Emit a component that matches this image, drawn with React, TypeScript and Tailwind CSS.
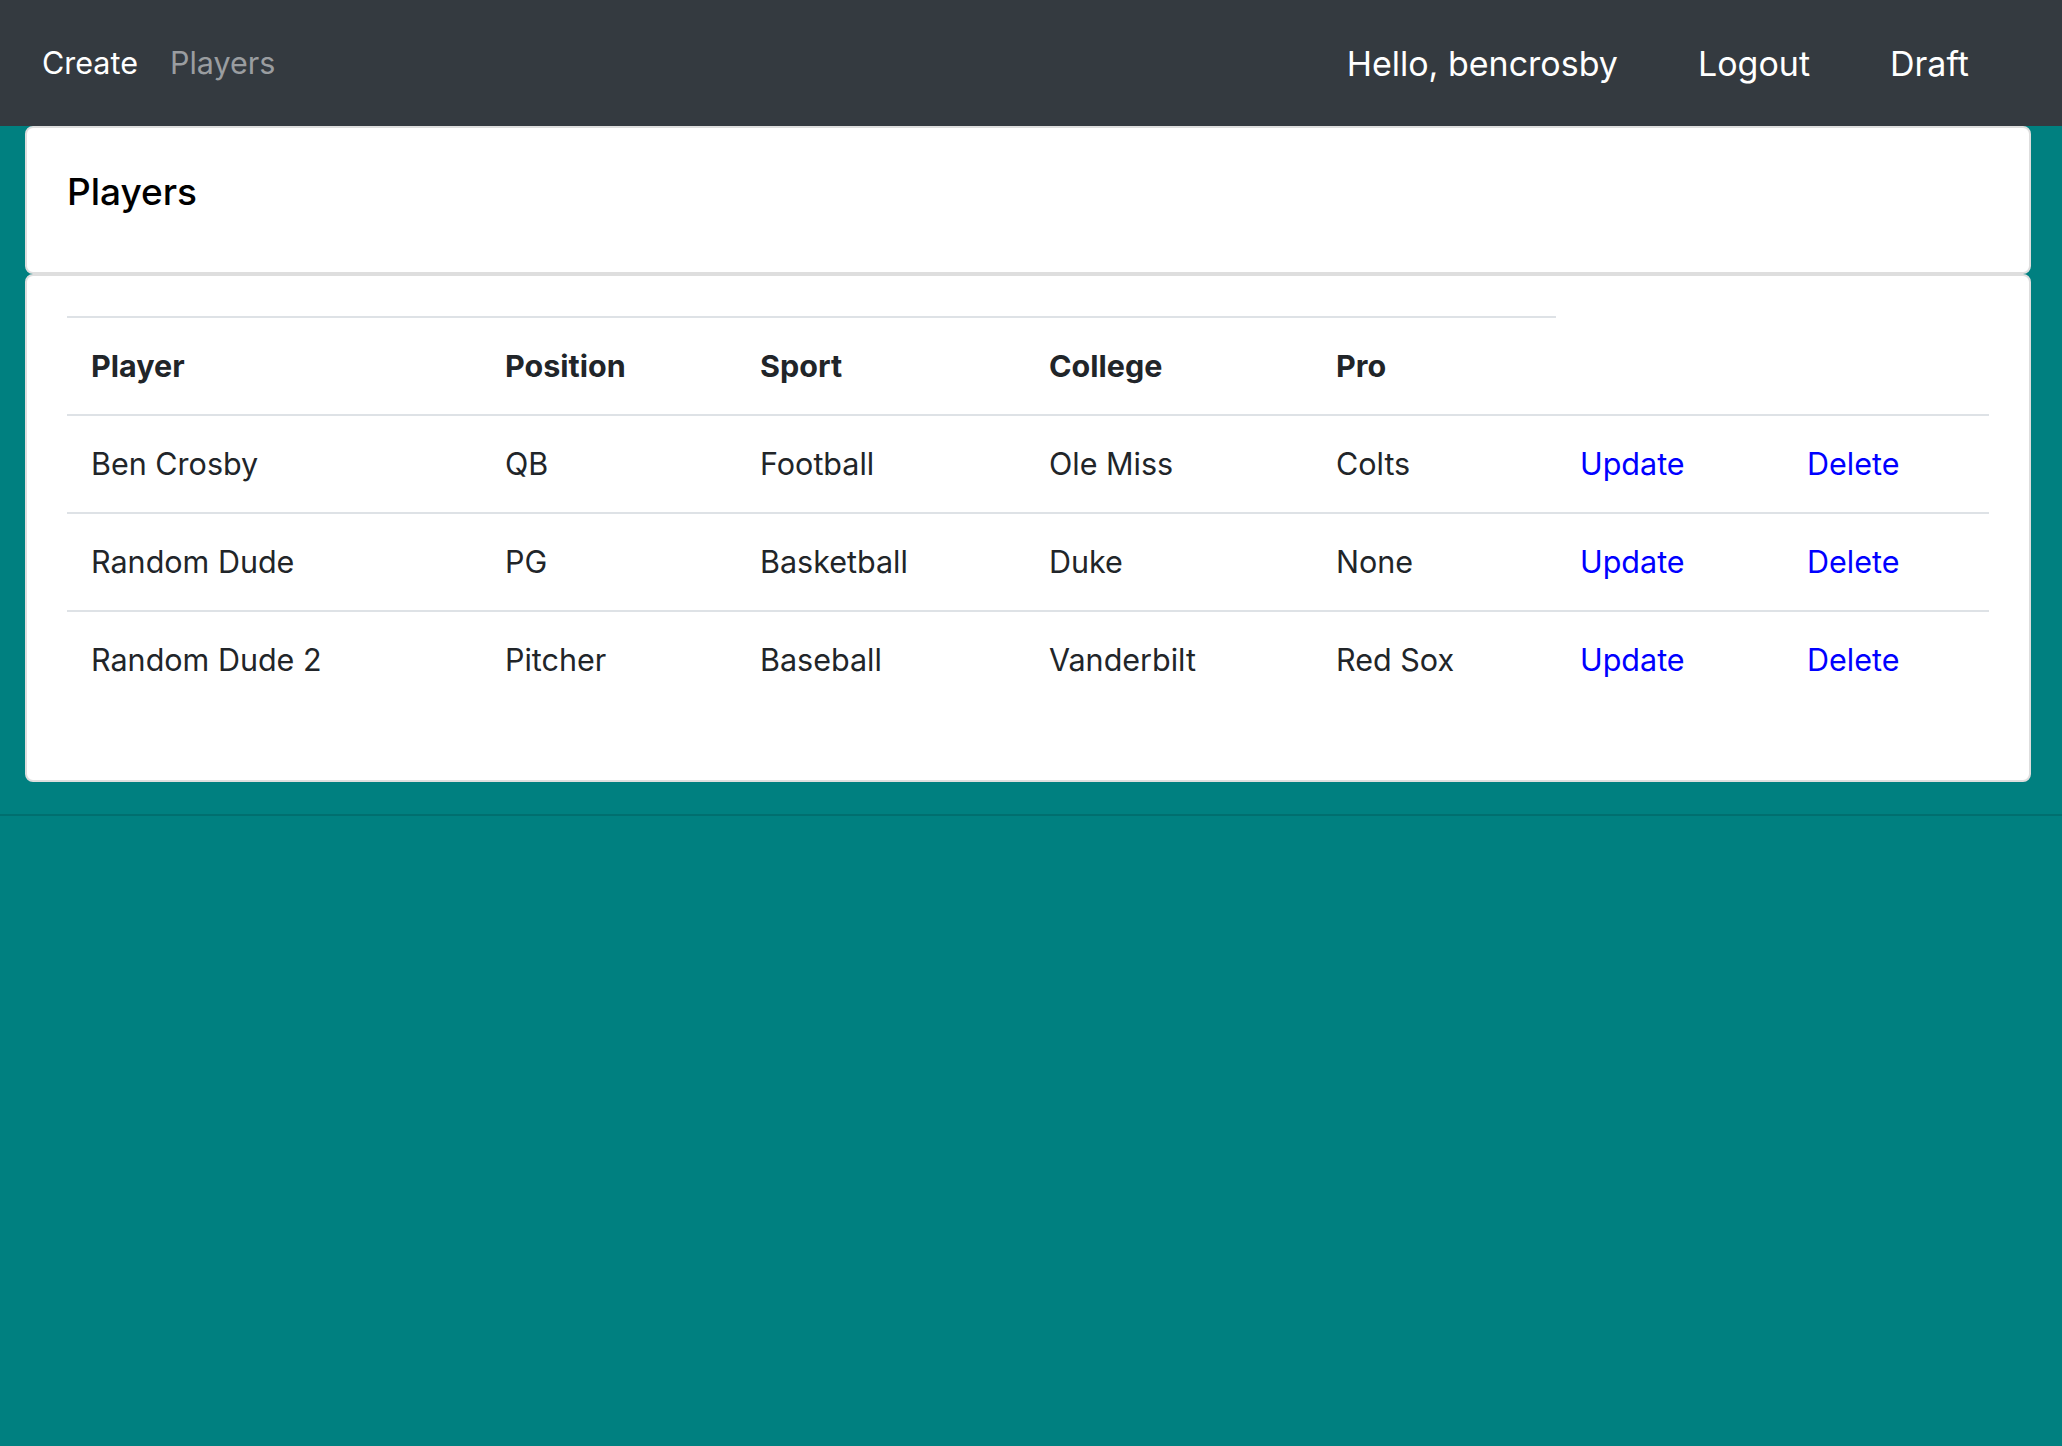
import React from 'react'

const players = [
  { name: 'Ben Crosby', position: 'QB', sport: 'Football', college: 'Ole Miss', pro: 'Colts' },
  { name: 'Random Dude', position: 'PG', sport: 'Basketball', college: 'Duke', pro: 'None' },
  { name: 'Random Dude 2', position: 'Pitcher', sport: 'Baseball', college: 'Vanderbilt', pro: 'Red Sox' },
]

const headers = ['Player', 'Position', 'Sport', 'College', 'Pro']

export default function App() {
  return (
    <div className="min-h-screen bg-[#008080] font-['Inter',sans-serif]">
      {/* Navbar */}
      <nav className="h-[126px] bg-[#343a40] flex items-center pl-[42px] pr-[93px]">
        <div className="flex items-center gap-[32px] text-[30.5px]">
          <a className="text-white">Create</a>
          <a className="text-[#9a9da0]">Players</a>
        </div>
        <div className="ml-auto flex items-center gap-[80px] text-[34px] text-white">
          <span>Hello, bencrosby</span>
          <a>Logout</a>
          <a>Draft</a>
        </div>
      </nav>

      <div className="ml-[25px] mr-[31px]">
        {/* Title card */}
        <div className="bg-white border-2 border-[#dedede] rounded-[8px] p-[40px] pb-[56px]">
          <h5 className="text-[37px] leading-[48px] font-medium text-black">Players</h5>
        </div>

        {/* Table card */}
        <div className="bg-white border-2 border-[#dedede] rounded-[8px] px-[40px] pt-[40px] pb-[72px]">
          <table className="table-fixed w-full border-collapse text-[30.5px] leading-[48px] text-[#212529]">
            <colgroup>
              <col className="w-[414px]" />
              <col className="w-[255px]" />
              <col className="w-[289px]" />
              <col className="w-[287px]" />
              <col className="w-[244px]" />
              <col className="w-[227px]" />
              <col />
            </colgroup>
            <thead>
              <tr>
                {headers.map((h) => (
                  <th
                    key={h}
                    className="text-left font-bold px-[24px] py-[24px] border-t-2 border-[#dee2e6]"
                  >
                    {h}
                  </th>
                ))}
              </tr>
            </thead>
            <tbody>
              {players.map((p) => (
                <tr key={p.name}>
                  <td className="px-[24px] py-[24px] border-t-2 border-[#dee2e6]">{p.name}</td>
                  <td className="px-[24px] py-[24px] border-t-2 border-[#dee2e6]">{p.position}</td>
                  <td className="px-[24px] py-[24px] border-t-2 border-[#dee2e6]">{p.sport}</td>
                  <td className="px-[24px] py-[24px] border-t-2 border-[#dee2e6]">{p.college}</td>
                  <td className="px-[24px] py-[24px] border-t-2 border-[#dee2e6]">{p.pro}</td>
                  <td className="px-[24px] py-[24px] border-t-2 border-[#dee2e6]">
                    <a className="text-[#0000ff]">Update</a>
                  </td>
                  <td className="px-[24px] py-[24px] border-t-2 border-[#dee2e6]">
                    <a className="text-[#0000ff]">Delete</a>
                  </td>
                </tr>
              ))}
            </tbody>
          </table>
        </div>
      </div>

      {/* Footer rule */}
      <div className="mt-[32px] h-[2px] bg-[#006f6f]" />
    </div>
  )
}
